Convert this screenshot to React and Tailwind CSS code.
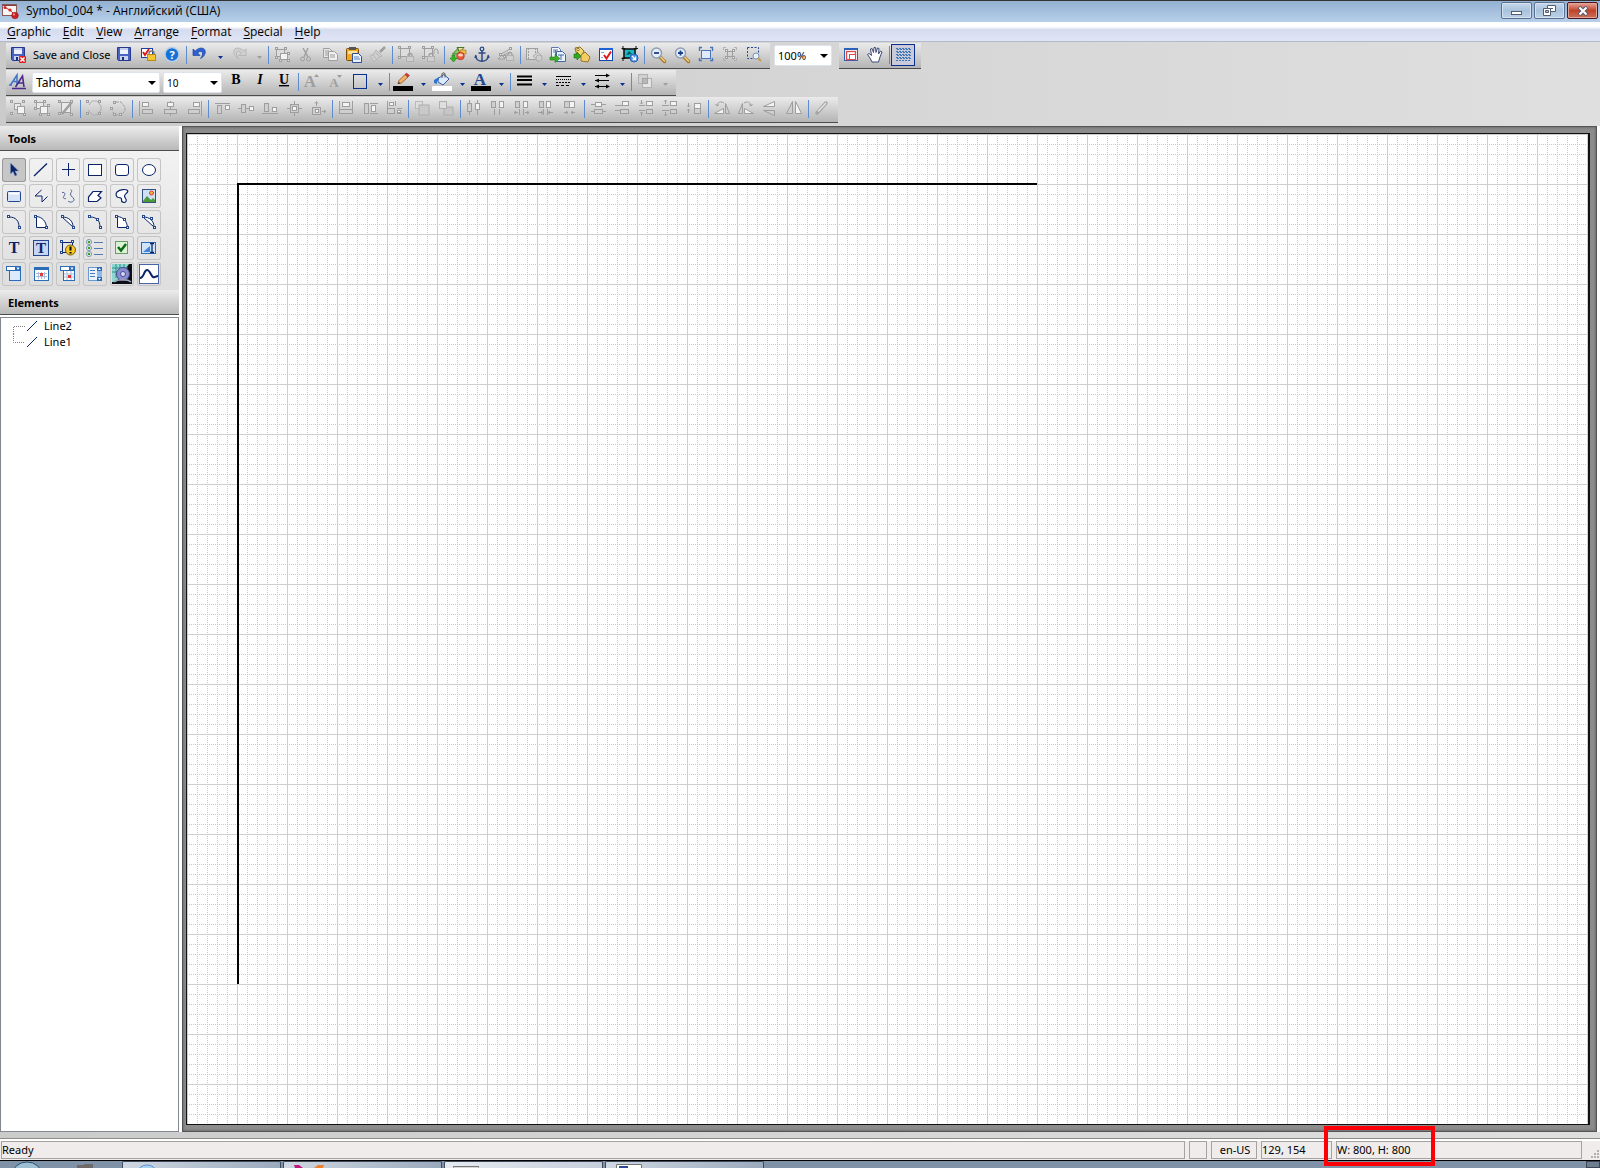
import React, { useState } from "react";
import clsx from "clsx";

const G = "#9e9e9e";
const L = "#cfcfcf";
const N = "#0a246a";

// small square drawn on the pixel grid
const Box = ({ x, y, w, h, fill = "none", c = G }) => (
  <rect x={x + 0.5} y={y + 0.5} width={w - 1} height={h - 1} fill={fill} stroke={c} />
);
const Handles = ({ pts, c = G, fill = "#e4e4e4" }) =>
  pts.map(([x, y]) => <Box key={`${x}-${y}`} x={x} y={y} w={3} h={3} c={c} fill={fill} />);

const Floppy = () => (
  <>
    <path d="M3.500 2.500h13v13h-12l-1-1z" fill="#4a62c0" stroke="#26378c" />
    <rect x="6" y="3" width="8" height="6" fill="#eef2fd" />
    <path d="M6 3h8v2H6z" fill="#c4d0f0" />
    <rect x="6" y="11" width="8" height="4" fill="#c9d2ef" />
    <rect x="8" y="12" width="2" height="3" fill="#1d2b74" />
  </>
);
const Lens = ({ children }) => (
  <>
    <path d="M12 12l4.500 4.500" stroke="#a87b2e" strokeWidth="3.500" strokeLinecap="round" />
    <path d="M12.500 12l4 4" stroke="#f0cf86" strokeWidth="1.500" strokeLinecap="round" />
    <circle cx="8.500" cy="8" r="5" fill="#e4eefb" stroke="#8f9bb0" strokeWidth="1.400" />
    {children}
  </>
);
const Lock = ({ x, y }) => (
  <g transform={`translate(${x} ${y})`}>
    <path d="M2 4V2.500a2 2 0 0 1 4 0V4" fill="none" stroke={G} strokeWidth="1.300" />
    <rect x="0.500" y="3.500" width="7" height="5" fill={L} stroke="#b0b0b0" />
  </g>
);

const ICONS = {
  saveClose: (<><Floppy /><rect x="11" y="11" width="7" height="7" rx="1" fill="#e02020" /><path d="M12.500 12.500l4 4m0-4l-4 4" stroke="#fff" strokeWidth="1.500" /></>),
  save: <Floppy />,
  check: (<><Box x={3} y={3} w={12} h={10} fill="#fff" c="#1b3fa5" /><path d="M5 7l2 3 4-6" fill="none" stroke="#e01818" strokeWidth="2" /><path d="M11 10V8.500a2.500 2.500 0 0 1 5 0V10" fill="none" stroke="#777" strokeWidth="1.400" /><rect x="9.500" y="9.500" width="8" height="6" fill="#f5c733" stroke="#b98a10" /></>),
  help: (<><circle cx="10" cy="9.500" r="7" fill="#1672d6" stroke="#b7cdea" strokeWidth="1.500" /><text x="10" y="13.500" textAnchor="middle" fontSize="11" fontWeight="700" fill="#fff" fontFamily="Noto Sans">?</text></>),
  undo: (<path d="M3 4v6.500h7L7.700 8C9.500 5.500 13 6 12.500 9c-.3 2-1 3-2 4.500 3-1.500 5-4 4.800-7C15 2.500 9.500 1.500 5.200 6z" fill="#2f62cf" stroke="#1c46a8" strokeWidth="0.700" />),
  redo: (<path d="M17 4v6.500h-7L12.300 8C10.500 5.500 7 6 7.500 9c.3 2 1 3 2 4.500-3-1.500-5-4-4.800-7C5 2.500 10.500 1.500 14.800 6z" fill={L} stroke="#adadad" strokeWidth="0.700" />),
  group: (<><Box x={6} y={4} w={7} h={7} fill="#e9e9e9" /><Box x={9} y={7} w={8} h={8} fill="#f3f3f3" /><Handles pts={[[2, 1], [14, 1], [2, 13], [15, 14]]} /></>),
  ungroup: (<><Box x={4} y={3} w={8} h={7} fill="#e9e9e9" /><Box x={8} y={7} w={8} h={8} fill="#f3f3f3" /><Handles pts={[[2, 1], [11, 1], [2, 8], [15, 5], [7, 14], [15, 14]]} /></>),
  regroup: (<><Box x={5} y={3} w={10} h={11} fill="#e9e9e9" /><path d="M6 15L16 3" stroke={G} strokeWidth="2.500" /><Handles pts={[[2, 1], [14, 1], [2, 13], [14, 14]]} /></>),
  dup: (<><Box x={4} y={4} w={9} h={8} fill="#ddd" /><Box x={8} y={8} w={8} h={7} fill="#f3f3f3" /><Handles pts={[[3, 2], [12, 2], [3, 11], [15, 7], [15, 14], [7, 14]]} /></>),
  cut: (<><path d="M7 3l5 9M12 3L8 12" stroke={G} strokeWidth="1.400" /><circle cx="6.500" cy="14" r="2" fill="none" stroke={G} /><circle cx="12.500" cy="14" r="2" fill="none" stroke={G} /></>),
  copy: (<><path d="M3.500 3.500h6l3 3v6h-9z" fill="#e6e6e6" stroke={G} /><path d="M5 6h4M5 8h4M5 10h3" stroke={G} /><path d="M8.500 6.500h6l3 3v6h-9z" fill="#efefef" stroke={G} /><path d="M10 10h5M10 12h5" stroke={G} /></>),
  paste: (<><rect x="2.500" y="3.500" width="12" height="12" rx="1" fill="#f2a91d" stroke="#7c4b08" /><rect x="5" y="2" width="7" height="3" fill="#555" /><path d="M4 6h9v3H4z" fill="#ffe29a" /><path d="M8.500 8.500h6l3 3v6h-9z" fill="#eaf2fd" stroke="#2d4f93" /><path d="M10 12h5M10 14h6" stroke="#5a84c8" /></>),
  brush: (<><path d="M17 2l-5 5" stroke={G} strokeWidth="2.500" /><path d="M8 5l6 6-3 1-5 5-4-6 4-2z" fill={L} stroke="#b4b4b4" /><path d="M5 10l4 5M8 8l4 4" stroke="#b4b4b4" /></>),
  lockShape: (<><Box x={4} y={3} w={10} h={9} fill="#ddd" /><Handles pts={[[2, 1], [12, 1], [2, 11]]} /><Lock x={10} y={8} /></>),
  unlockShape: (<><Box x={4} y={3} w={9} h={9} fill="#ddd" /><Handles pts={[[2, 1], [11, 1], [2, 11]]} /><Lock x={7} y={8} /><path d="M14 9V6a2 2 0 0 1 4 0v3" fill="none" stroke={G} /></>),
  shapes: (<><path d="M9 2.500h7L11 8z" fill="#f4e3a0" stroke="#46752c" /><path d="M4.500 9L10 3.500 12 9z" fill="#8ccf58" stroke="#46752c" /><path d="M12 5h6v4h-6z" fill="#f0c14a" stroke="#a6741b" strokeWidth="0.700" /><circle cx="12.500" cy="11" r="3.800" fill="#e85a3a" stroke="#b02e1a" strokeWidth="0.700" /><ellipse cx="12.500" cy="10" rx="2.500" ry="1.500" fill="#ffd1bd" /><path d="M4 10h3v3h2l-3.500 4L2 13h2z" fill="#38b424" stroke="#188410" strokeWidth="0.600" /></>),
  anchor: (<><circle cx="10" cy="4" r="1.800" fill="none" stroke="#2b4a86" strokeWidth="1.300" /><path d="M10 6v10M6.500 8h7M4 11c0 7 12 7 12 0M4 10l-1 3M16 10l1 3" fill="none" stroke="#2b4a86" strokeWidth="1.500" /></>),
  anchorGray: (<><path d="M5 9l9-5M8 10l6-3M4 13l5-4" stroke={G} /><Handles pts={[[13, 2], [3, 8], [7, 10]]} /><path d="M2 14l4-4 3 4z" fill={L} stroke={G} /><Lock x={10} y={7} /></>),
  filmGray: (<><Box x={2} y={3} w={12} h={12} fill="#ddd" /><path d="M4.500 3v12M11.500 3v12" stroke={G} strokeDasharray="2 1" /><path d="M9 11l5-4 4 4-4 6z" fill={L} stroke="#b0b0b0" /><circle cx="15" cy="13" r="3" fill={L} stroke="#b0b0b0" /></>),
  pages: (<><path d="M3.500 2.500h7l2 2v9h-9z" fill="#f3f7fd" stroke="#5a79ad" /><path d="M5 5h5M5 7h3M7.500 5v6" stroke="#5a79ad" /><path d="M8.500 6.500h6l3 3v7h-9z" fill="#eaf2fd" stroke="#4467a3" /><path d="M10 10h6M13 10v5" stroke="#4467a3" /><path d="M2 12h5v-2.500l5 4-5 4V15H2z" fill="#3fae2a" stroke="#1d7d12" strokeWidth="0.600" /></>),
  tags: (<><path d="M3 3l5-1 4 4-3 6-4-1z" fill="#f4da74" stroke="#8f6f1c" /><path d="M9 10l4-3 5 5-2 5-7-1z" fill="#f3cd63" stroke="#9b7425" /><circle cx="6" cy="4.500" r="1.200" fill="#fff" stroke="#8f6f1c" /><path d="M2 9h3V7l4 4-4 4v-2H2z" fill="#2fa91f" stroke="#15700c" strokeWidth="0.600" /></>),
  checkList: (<><Box x={3} y={3} w={14} h={13} fill="#fff" c="#0b46b4" /><rect x="3" y="3" width="14" height="2" fill="#1e62d8" /><path d="M5 7.500h3M5 12.500h2" stroke="#7ea0d8" /><path d="M8 10l2.500 3.500L15 6.500" fill="none" stroke="#e01818" strokeWidth="2" /></>),
  picClock: (<><rect x="4" y="4" width="11" height="9" fill="#18b9c9" stroke="#111" strokeWidth="1.600" /><path d="M3 1v4M1.500 3.500h4M16 1v4M14 3.500h4M1.500 13.500h4M3 12v4" stroke="#111" /><path d="M6 10l3-4 3 3z" fill="#0d5560" /><circle cx="14" cy="13" r="4" fill="#4d8fe6" stroke="#2460b8" /><path d="M12 11l3.500 3.500M15.500 11.500v3h-3" fill="none" stroke="#fff" strokeWidth="1.300" /></>),
  zoomOut: <Lens><path d="M6 8h5" stroke="#1d3f8d" strokeWidth="1.800" /></Lens>,
  zoomIn: <Lens><path d="M6 8h5M8.500 5.500v5" stroke="#1d3f8d" strokeWidth="1.800" /></Lens>,
  fit: (<><Box x={5} y={5} w={10} h={9} fill="#dfeafc" c="#4a74b8" /><path d="M3.500 6V2.500H6M14 2.500h2.500V6M3.500 13v2.500H6M14 15.500h2.500V13" fill="none" stroke="#4a74b8" strokeWidth="1.400" /></>),
  fitGray: (<><Box x={7} y={6} w={6} h={6} /><Handles pts={[[5, 4], [12, 4], [5, 11], [12, 11]]} fill="#f4f4f4" /><path d="M3.500 5V2.500H6M14 2.500h2.500V5M3.500 13v2.500H6M14 15.500h2.500V13" fill="none" stroke="#b0b0b0" /></>),
  zoomSel: (<><rect x="3.500" y="2.500" width="11" height="11" fill="none" stroke="#20468f" strokeDasharray="2 1.500" /><circle cx="12" cy="11" r="3" fill="#e8f0fb" stroke="#7b93b8" /><path d="M14 13l3 3" stroke="#c79a4b" strokeWidth="2" /></>),
  windowRed: (<><Box x={3} y={3} w={14} h={13} fill="#fff" c="#2b62b8" /><rect x="3" y="3" width="14" height="2" fill="#2b62b8" /><rect x="5.500" y="6.500" width="9" height="8" fill="none" stroke="#e24848" strokeWidth="1.300" /><rect x="8.500" y="9.500" width="6" height="5" fill="#fff" stroke="#e24848" /></>),
  hand: (<path d="M7 17L5 13 2.500 9.500 4 8.500l2.500 2L5.500 4 7 3.500l1.500 4L9 2.500h1.500L11 7.500l1.500-4.500L14 3.500 13.500 9l2-3 1.500 1-2 5-1.500 5z" fill="#fff" stroke="#3e4a78" />),
  gridOn: (<path d="M3 3.500h14M4 4.500h14M3 6.500h14M4 7.500h14M3 9.500h14M4 10.500h14M3 12.500h14M4 13.500h14M3 15.500h14" stroke="#3f77b8" strokeDasharray="2 1" />),

  fontAA: (<><path d="M1 13h3M2.500 13L9 3v10M4.500 9.500H9" fill="none" stroke="#3f74c9" strokeWidth="1.500" /><path d="M7.500 15L14.500 4l1.500 11M10 11h6M4 16.500h14" fill="none" stroke="#4b2a8c" strokeWidth="1.600" /></>),
  bold: <text x="10" y="12" textAnchor="middle" fontSize="14" fontWeight="700" fontFamily="Liberation Serif">B</text>,
  italic: <text x="10" y="12" textAnchor="middle" fontSize="14" fontWeight="700" fontStyle="italic" fontFamily="Liberation Serif">I</text>,
  underline: <text x="10" y="12" textAnchor="middle" fontSize="14" fontWeight="700" textDecoration="underline" fontFamily="Liberation Serif">U</text>,
  grow: (<><text x="8" y="15" textAnchor="middle" fontSize="17" fontWeight="700" fill={G} fontFamily="Liberation Serif">A</text><path d="M12 5l2.500-3L17 5z" fill={G} /></>),
  shrink: (<><text x="8" y="15" textAnchor="middle" fontSize="13" fontWeight="700" fill={G} fontFamily="Liberation Serif">A</text><path d="M11 3h5l-2.500 3z" fill={G} /></>),
  rect: <Box x={3} y={2} w={14} h={15} c="#0a2f8f" />,
  pencil: (<><path d="M5 11.500L6 8.500l6-6 3 2.500-6.500 6z" fill="#f3b268" stroke="#8c4a1c" strokeWidth="0.800" /><path d="M5 12l.7-2 1.500 1.300z" fill="#222" /><path d="M12 2.500L13.500 1l3 2.500L15 5z" fill="#d83a3a" stroke="#8c2a2a" strokeWidth="0.500" /><path d="M0 14h20v5H0z" fill="#000" /></>),
  bucket: (<><path d="M6 6.500l6-4 5 4.500-6 6-5-3z" fill="#dbe9fb" stroke="#355d9e" /><path d="M10 6V2c0-1.500 3-1.500 3 0v3.500" fill="none" stroke="#555" /><path d="M2 8l5-3v3l-2 1v3l-3-1z" fill="#2f74d0" /><path d="M0 14h20v5H0z" fill="#fff" /></>),
  fontColor: (<><text x="9" y="13" textAnchor="middle" fontSize="17" fontWeight="700" fill="#24468f" fontFamily="Liberation Serif">A</text><path d="M0 14h20v5H0z" fill="#000" /></>),
  weight: <path d="M3 4.500h15M3 8h15M3 12.500h15" stroke="#000" strokeWidth="2" />,
  dash: (<><path d="M3 4.500h15" stroke="#000" /><path d="M3 7.500h15" stroke="#000" strokeDasharray="1 1" /><path d="M3 10.500h15" stroke="#000" strokeDasharray="2 1" /><path d="M3 13.500h15" stroke="#000" strokeDasharray="3 2" /></>),
  arrows: (<><path d="M3 3.500h14M3 8.500h14M3 14.500h14" stroke="#000" /><path d="M14 1.500l4 2-4 2zM7 6.500l-4 2 4 2zM7 12.500l-4 2 4 2zM14 12.500l4 2-4 2z" fill="#000" /></>),
  shadow: (<><Box x={3} y={2} w={10} h={10} fill="#d0d0d0" c="#b0b0b0" /><Box x={7} y={6} w={10} h={10} fill="#e4e4e4" c="#b0b0b0" /><Box x={7} y={6} w={6} h={6} fill="#b8b8b8" c="#a5a5a5" /></>),

  poly1: (<><path d="M5 6l3-4h5l4 5v4l-4 5H9l-5-5" fill="none" stroke="#adadad" /><Handles pts={[[2, 1], [14, 1], [2, 13], [14, 13]]} /></>),
  poly2: (<><path d="M8 3h5l4 5v4l-4 4H7l-3-4" fill="none" stroke={G} strokeDasharray="3 1" /><Handles pts={[[5, 2], [2, 8], [5, 14], [11, 14]]} /></>),
  alLeft: (<><path d="M3.500 2v15" stroke={G} /><Box x={6} y={3} w={7} h={5} fill="#f4f4f4" /><Box x={6} y={10} w={11} h={5} fill={L} /></>),
  alCenter: (<><path d="M10.500 2v15" stroke={G} /><Box x={7} y={3} w={7} h={5} fill="#f4f4f4" /><Box x={4} y={10} w={13} h={5} fill={L} /></>),
  alRight: (<><path d="M17.500 2v15" stroke={G} /><Box x={9} y={3} w={7} h={5} fill="#f4f4f4" /><Box x={4} y={10} w={12} h={5} fill={L} /></>),
  alTop: (<><path d="M3 4.500h15" stroke={G} /><Box x={5} y={6} w={5} h={9} fill={L} /><Box x={13} y={6} w={5} h={5} fill="#f4f4f4" /></>),
  alMiddle: (<><path d="M2 9.500h16" stroke={G} /><Box x={5} y={5} w={5} h={9} fill={L} /><Box x={13} y={7} w={5} h={5} fill="#f4f4f4" /></>),
  alBottom: (<><path d="M2 14.500h16" stroke={G} /><Box x={4} y={4} w={5} h={9} fill={L} /><Box x={12} y={8} w={5} h={5} fill="#f4f4f4" /></>),
  ctr: (<><path d="M3 9.500h15M10.500 2v15" stroke={G} /><Box x={6} y={5} w={9} h={9} fill={L} /><Box x={8} y={7} w={5} h={5} fill="#f4f4f4" /></>),
  ctrPage: (<><Box x={4} y={8} w={9} h={8} fill={L} /><Box x={7} y={10} w={4} h={4} fill="#f4f4f4" /><path d="M8.500 7V3M7 4.500l1.500-2 1.500 2M14 12.500h4M16 11l2 1.500-2 1.500" fill="none" stroke={G} /></>),
  sameW: (<><path d="M3.500 2v8M16.500 2v8" stroke={G} /><Box x={6} y={3} w={8} h={5} fill="#f4f4f4" /><Box x={3} y={10} w={14} h={5} fill={L} /></>),
  sameH: (<><path d="M10 4.500h8M10 14.500h8" stroke={G} /><Box x={4} y={4} w={5} h={11} fill={L} /><Box x={11} y={6} w={5} h={7} fill="#f4f4f4" /></>),
  sameWH: (<><path d="M3.500 2v7M11.500 2v5M13 9.500h5M13 14.500h5" stroke={G} /><Box x={5} y={3} w={5} h={4} fill="#f4f4f4" /><Box x={3} y={9} w={8} h={6} fill={L} /><Box x={13} y={11} w={4} h={3} fill="#f4f4f4" /></>),
  front: (<><Box x={3} y={2} w={8} h={8} fill="#dedede" c="#b9b9b9" /><rect x="7" y="6" width="10" height="10" fill="#c9c9c9" stroke="#adadad" /></>),
  back: (<><rect x="8" y="8" width="9" height="8" fill="#c6c6c6" stroke="#adadad" /><Box x={3} y={2} w={8} h={8} fill="#dedede" c="#b0b0b0" /></>),
  dist1: (<><path d="M5.500 1v15M13.500 1v15" stroke={G} /><Box x={3} y={4} w={5} h={9} fill={L} /><Box x={11} y={4} w={5} h={7} fill="#f4f4f4" /></>),
  dist2: (<><Box x={3} y={2} w={5} h={7} fill={L} /><Box x={11} y={2} w={5} h={7} fill="#f4f4f4" /><path d="M6.500 10v6M11.500 10v6" stroke={G} /></>),
  dist3: (<><Box x={3} y={2} w={5} h={7} fill={L} /><Box x={11} y={2} w={5} h={7} fill="#f4f4f4" /><path d="M7.500 10v6M11.500 10v6M2 13.500h4M13 13.500h4M4 12l-2 1.500 2 1.500M15 12l2 1.500-2 1.500" fill="none" stroke={G} /></>),
  dist4: (<><Box x={3} y={2} w={5} h={7} fill={L} /><Box x={10} y={2} w={5} h={7} fill="#f4f4f4" /><path d="M7.500 10v6M11.500 10v6M2 13.500h5M12 13.500h5M5 12l2 1.500-2 1.500M14 12l-2 1.500 2 1.500" fill="none" stroke={G} /></>),
  dist5: (<><Box x={4} y={2} w={6} h={7} fill={L} /><Box x={9} y={2} w={6} h={7} fill="#f4f4f4" /><path d="M4 13.500h4M11 13.500h4M6 12l2 1.500-2 1.500M13 12l-2 1.500 2 1.500" fill="none" stroke={G} /></>),
  vdist1: (<><path d="M3 5.500h15M3 12.500h15" stroke={G} /><Box x={7} y={3} w={7} h={5} fill="#f4f4f4" /><Box x={6} y={10} w={9} h={5} fill={L} /></>),
  vdist2: (<><path d="M3 6.500h7M3 11.500h7" stroke={G} /><Box x={10} y={2} w={7} h={5} fill="#f4f4f4" /><Box x={8} y={10} w={9} h={5} fill={L} /></>),
  vdist3: (<><path d="M3 6.500h6M3 11.500h6M5.500 1v4M4 3.500l1.500 1.500L7 3.500M5.500 13v4M4 14.500L5.500 13 7 14.500" fill="none" stroke={G} /><Box x={10} y={2} w={7} h={5} fill="#f4f4f4" /><Box x={10} y={10} w={7} h={5} fill={L} /></>),
  vdist4: (<><path d="M2 6.500h7M2 11.500h7M5.500 1v4M4 2.500L5.500 1 7 2.500M5.500 13v4M4 15.500L5.500 17 7 15.500" fill="none" stroke={G} /><Box x={10} y={2} w={7} h={5} fill="#f4f4f4" /><Box x={10} y={10} w={7} h={5} fill={L} /></>),
  vdist5: (<><path d="M4.500 4v4M3 6.500l1.500 1.500L6 6.500M4.500 10v4M3 11.500L4.500 10 6 11.500" fill="none" stroke={G} /><Box x={10} y={4} w={7} h={6} fill="#f4f4f4" /><Box x={10} y={9} w={7} h={6} fill={L} /></>),
  rotL: (<><path d="M2.500 14.500h9v-5z" fill="#f4f4f4" stroke={G} /><path d="M13.500 4.500v10h4z" fill={L} stroke={G} /><path d="M5 7c0-4 4-5 7-3M5 7L3.500 5M5 7l2-1.500" fill="none" stroke={G} /></>),
  rotR: (<><path d="M8.500 9.500v5h9z" fill="#f4f4f4" stroke={G} /><path d="M6.500 4.500v10h-4z" fill={L} stroke={G} /><path d="M15 7c0-4-4-5-7-3M15 7l1.500-2M15 7l-2-1.500" fill="none" stroke={G} /></>),
  flipV: (<><path d="M14.500 2.500v5h-11z" fill="#f4f4f4" stroke={G} /><path d="M14.500 16.500v-5h-11z" fill={L} stroke={G} /></>),
  flipH: (<><path d="M8.500 2.500v12h-6z" fill={L} stroke={G} /><path d="M11.500 2.500v12h6z" fill="#f4f4f4" stroke={G} /></>),
  editPen: (<><path d="M5 14l9-10" stroke="#a5a5a5" strokeWidth="3.500" strokeLinecap="round" /><path d="M6 12.500L14 4" stroke="#e4e4e4" strokeWidth="1.500" /></>),
};

const Icon = ({ name }) => (
  <svg width="20" height="20" viewBox="0 0 20 20" className="block shrink-0" aria-hidden="true">{ICONS[name]}</svg>
);

// "|" is a divider, "v" an active drop arrow, "x" a disabled one
const STD_LEFT = ["save", "check", "help", "|", "undo", "v", "redo", "x", "|", "dup", "cut", "copy", "paste", "brush", "|", "lockShape", "unlockShape", "|", "shapes", "anchor", "anchorGray", "|", "filmGray", "pages", "tags", "checkList", "picClock", "|", "zoomOut", "zoomIn", "fit", "fitGray", "zoomSel"];
const FORMAT = ["bold", "italic", "underline", "|", "grow", "shrink", "rect", "v", "|", "pencil", "v", "bucket", "v", "fontColor", "v", "|", "weight", "v", "dash", "v", "arrows", "v", "|", "shadow", "x"];
const ARRANGE = ["group", "ungroup", "regroup", "|", "poly1", "poly2", "|", "alLeft", "alCenter", "alRight", "|", "alTop", "alMiddle", "alBottom", "ctr", "ctrPage", "|", "sameW", "sameH", "sameWH", "|", "front", "back", "|", "dist1", "dist2", "dist3", "dist4", "dist5", "|", "vdist1", "vdist2", "vdist3", "vdist4", "vdist5", "|", "rotL", "rotR", "flipV", "flipH", "|", "editPen"];

function Items({ list }) {
  return list.map((it, i) => {
    if (it === "|") {
      return <span key={i} className="flex w-1 shrink-0 justify-center"><span className="mt-px h-[18px] w-px bg-[#5f8bd0]" /></span>;
    }
    if (it === "v" || it === "x") {
      return (
        <button key={i} type="button" aria-label="More options" className="flex h-5 w-[15px] shrink-0 items-center justify-center pt-[5px] pl-0.5">
          <svg width="5" height="3" viewBox="0 0 5 3"><path d="M0 0h5L2.500 3z" fill={it === "v" ? "#0a2f8f" : G} /></svg>
        </button>
      );
    }
    return (
      <button key={i} type="button" aria-label={it} className="flex h-5 w-6 shrink-0 justify-center">
        <Icon name={it} />
      </button>
    );
  });
}

const Bar = ({ children, className }) => (
  <div className={clsx("flex h-[26px] items-start border-b border-[#4c4c4c] bg-linear-to-b from-[#ebebeb] via-[#d0d0d0] to-[#b4b4b4] pt-0.5", className)}>
    {children}
  </div>
);

const Combo = ({ label, value, options, className }) => (
  <div className={clsx("relative h-[21px] shrink-0 rounded-xs border border-[#dfe3ea] bg-white", className)}>
    <select aria-label={label} defaultValue={value} className="block h-full w-full appearance-none bg-transparent pl-[3px] leading-[18px] outline-none">
      {options.map((o) => <option key={o}>{o}</option>)}
    </select>
    <svg width="8" height="4" viewBox="0 0 8 4" className="pointer-events-none absolute top-2 right-[3px]"><path d="M0 0h8L4 4z" /></svg>
  </div>
);

const Tool = ({ children }) => (
  <svg width="24" height="24" viewBox="0 0 24 24" className="block" fill="none" stroke={N} aria-hidden="true">{children}</svg>
);
const ends = (pts) => <Handles pts={pts} c="#24468f" fill="#fff" />;

const TOOLS = [
  ["Select", <path d="M8.500 5v11l2.500-2.500 2 4.500 2-1-2-4h3.500z" fill={N} stroke="#7d92bd" strokeWidth="0.500" />],
  ["Line", <path d="M5 18L18 5.500" strokeWidth="1.300" />],
  ["Cross", <path d="M6 11.500h13M12.500 5v13" />],
  ["Rectangle", <rect x="5.500" y="6.500" width="13" height="11" fill="#fff" />],
  ["Rounded rectangle", <rect x="5.500" y="6.500" width="13" height="11" rx="2.500" fill="#fff" />],
  ["Ellipse", <ellipse cx="12" cy="12" rx="6.500" ry="5.500" fill="#fff" />],
  ["Button", <><rect x="5.500" y="7.500" width="13" height="10" rx="1" fill="#d5e2f7" stroke="#24468f" /><path d="M7 9.500h10" stroke="#fff" strokeWidth="2" /></>],
  ["Polyline", <path d="M12.500 6L6 12h7v6l5.500-5.500" />],
  ["Curve", <path d="M6 8.500c3-.5 3.500 1.500 2 3.500s0 3 2 2.500M12 17c2 2 6 1 6-1.500s-4-3-3.500-5.500S17 7 14.500 5.500" stroke="#4d6190" />],
  ["Polygon", <path d="M5.500 17.500V13L10 7.500h8.500l-3.500 4 3 2.500-4 3.500z" fill="#fff" strokeWidth="1.200" />],
  ["Closed curve", <path d="M7 8c3-3 9-3 10.500-1.500C19 8 14.500 10 14.500 12s3 3.500 1.500 5.500-5 .5-4.500-2c.3-1.500-1-2-3-2S5 10 7 8z" fill="#fff" strokeWidth="1.200" />],
  ["Image", <><rect x="5.500" y="5.500" width="13" height="13" fill="#cfe0f6" stroke="#31517f" /><path d="M6 17l4-5 4 4 2-2 2 2v2H6z" fill="#4c9a3b" stroke="none" /><circle cx="14.500" cy="9" r="2" fill="#f5b23a" stroke="#d7422c" /></>],
  ["Arc", <><path d="M7 7c7 0 10 4 10 10" />{ends([[5, 5], [16, 16]])}</>],
  ["Pie", <><path d="M7.500 17.500v-11C13 7 17 11 17.500 17.500z" fill="#fff" />{ends([[5, 5], [16, 16]])}</>],
  ["Chord", <><path d="M6 7c7 0 11 4 11 10z" fill="#fff" />{ends([[5, 5], [16, 16]])}</>],
  ["Arc by points", <><path d="M7 7c7 0 10 4 10 10" />{ends([[5, 5], [13, 8], [16, 16]])}</>],
  ["Pie by points", <><path d="M7.500 17.500v-11C13 7 17 11 17.500 17.500z" fill="#fff" />{ends([[5, 5], [13, 8], [16, 16]])}</>],
  ["Chord by points", <><path d="M6 7c7 0 11 4 11 10z" fill="#fff" />{ends([[5, 5], [13, 7], [16, 16]])}</>],
  ["Text", <text x="12" y="17" textAnchor="middle" fontSize="16" fontWeight="700" fill={N} stroke="none" fontFamily="Liberation Serif">T</text>],
  ["Text box", <><rect x="4.500" y="4.500" width="15" height="15" fill="#c5d5f2" stroke="#24468f" /><text x="12" y="17" textAnchor="middle" fontSize="15" fontWeight="700" fill={N} stroke="none" fontFamily="Liberation Serif">T</text></>],
  ["Active element", <><rect x="6.500" y="6.500" width="10" height="10" />{ends([[4, 4], [15, 4], [4, 15]])}<circle cx="14.500" cy="14" r="5" fill="#f6c728" stroke="#7b5a0b" /><path d="M14.500 10.500v4m0 1.500v1.500" stroke="#000" strokeWidth="2" /></>],
  ["Radio group", <>{[6, 12, 18].map((y) => <g key={y}><circle cx="6" cy={y} r="2.500" fill="#fff" stroke="#7a8ca8" /><circle cx="6" cy={y} r="1.300" fill="#2fa32a" stroke="none" /><path d={`M11 ${y + 0.5}h9`} stroke="#5878ad" /></g>)}</>],
  ["Check box", <><rect x="5.500" y="5.500" width="12" height="12" fill="#ddf3d8" stroke="#6a9a68" /><path d="M8 11l3 3.500 5-6.500" stroke="#0c6a12" strokeWidth="2.500" /></>],
  ["Input field", <><rect x="4.500" y="6.500" width="14" height="11" fill="#cfe4fb" stroke="#2b6cb8" /><path d="M6 16l7-6v6z" fill="#3d86d8" stroke="none" /><path d="M13 7.500h4M13 16.500h4M15 7v9" strokeWidth="1.300" /></>],
  ["Combo box", <><rect x="4.500" y="4.500" width="14" height="4" fill="#fff" stroke="#2b6cb8" /><path d="M13 4h6v5h-6z" fill="#2b6cb8" stroke="none" /><path d="M14.500 5.500h3L16 8z" fill="#fff" stroke="none" /><rect x="7.500" y="8.500" width="11" height="10" fill="#dcebfb" stroke="#2b6cb8" /></>],
  ["Calendar", <><rect x="5.500" y="5.500" width="14" height="13" fill="#fff" stroke="#2b6cb8" /><path d="M5 5h15v3H5z" fill="#2b6cb8" stroke="none" /><path d="M7 11.500h11M7 14.500h11M9.500 10v7M12.500 10v7M15.500 10v7" stroke="#a9bcdc" /><path d="M11 11h3v3h-3z" fill="#e03a3a" stroke="none" /></>],
  ["Date picker", <><rect x="4.500" y="4.500" width="14" height="4" fill="#fff" stroke="#2b6cb8" /><path d="M13 4h6v5h-6z" fill="#2b6cb8" stroke="none" /><path d="M14.500 5.500h3L16 8z" fill="#fff" stroke="none" /><rect x="7.500" y="8.500" width="11" height="10" fill="#fff" stroke="#2b6cb8" /><path d="M8 12h10M8 15h10M11 9v9M15 9v9" stroke="#a9bcdc" /><path d="M12 13h3v3h-3z" fill="#e03a3a" stroke="none" /></>],
  ["List", <><rect x="5.500" y="5.500" width="13" height="13" fill="#eaf3fd" stroke="#6a9ad0" /><path d="M7 8.500h5M7 11.500h5M7 14.500h5" stroke="#4a7ab8" /><path d="M14 5h5v14h-5z" fill="#8fb9e6" stroke="none" /><path d="M14 5h5v4h-5zM14 15h5v4h-5z" fill="#2b6cb8" stroke="none" /><path d="M15 8l1.500-2L18 8zM15 16l1.500 2 1.500-2z" fill="#fff" stroke="none" /></>],
  ["Symbol", <><rect x="2" y="2" width="20" height="20" fill="#0b0f14" stroke="none" /><path d="M2 2h17L6 20H2z" fill="#8fd5d0" stroke="none" /><path d="M2 6h16M2 10h13M6 2v14M10 2v12M14 2v9" stroke="#2a8f8b" /><circle cx="13" cy="12" r="6.500" fill="#8a8cd0" stroke="#494a90" /><circle cx="13" cy="12" r="2.500" fill="#d8daf4" stroke="#494a90" /><path d="M4 20c3-3 14-3 17 0" stroke="#9fa3b5" strokeWidth="1.500" /></>],
  ["Trend", <><rect x="2.500" y="2.500" width="19" height="19" fill="#fff" stroke="#4a64a8" /><path d="M3 16c4 0 4-8 7-8s4 6 6 7 3-1 5-1" strokeWidth="2" /></>],
];

const MENU = ["Graphic", "Edit", "View", "Arrange", "Format", "Special", "Help"];

function TitleBar() {
  const btn = "flex h-[17px] w-[31px] items-center justify-center rounded-xs border border-[#5c7192] bg-linear-to-b from-[#c6d8ea] via-[#a9c2db] to-[#bdd2e8] shadow-[inset_0_0_0_1px_#d3e1f0]";
  return (
    <header className="flex h-[22px] shrink-0 items-start border-t border-[#333] bg-linear-to-b from-[#94b1d2] to-[#b7cfe9] pr-0.5 pl-0.5">
      <svg width="17" height="17" viewBox="0 0 17 17" className="mt-0.5" aria-hidden="true">
        <rect x="0.500" y="1.500" width="14" height="11" fill="#f8f4f4" stroke="#8a5a5a" />
        <path d="M1 2h13v1H1z" fill="#8d3a3a" />
        <path d="M2 4l6 3 5 5" stroke="#b53030" fill="none" />
        <circle cx="3" cy="4.500" r="1.500" fill="#d92525" />
        <circle cx="8" cy="7" r="1.600" fill="#d92525" />
        <circle cx="13" cy="12.500" r="3.300" fill="#c92222" stroke="#8d1818" strokeWidth="0.500" />
        <circle cx="12" cy="11.500" r="1" fill="#f6a5a5" />
      </svg>
      <h1 className="ml-[7px] flex-1 font-['Open_Sans',sans-serif] text-xs leading-5">Symbol_004 * - Английский (США)</h1>
      <div className="mt-px flex gap-0.5">
        <button type="button" aria-label="Minimize" className={btn}>
          <svg width="11" height="11" viewBox="0 0 11 11"><rect x="0.500" y="6.500" width="10" height="3" fill="#fff" stroke="#555d70" /></svg>
        </button>
        <button type="button" aria-label="Restore" className={btn}>
          <svg width="13" height="11" viewBox="0 0 13 11" fill="#fff" stroke="#555d70"><path d="M4.500.500h8v6h-8z" /><path d="M7 3.500h3" /><path d="M.500 3.500h7v7h-7z" /><path d="M2.500 5.500h3v2h-3z" fill="#a9c2db" /></svg>
        </button>
        <button type="button" aria-label="Close" className="flex h-[17px] w-[31px] items-center justify-center rounded-xs border border-[#4b1622] bg-linear-to-b from-[#e5a497] via-[#bf4329] to-[#cc6f58] shadow-[inset_0_0_0_1px_#e2a598]">
          <svg width="12" height="10" viewBox="0 0 12 10"><path d="M2 1l8 8M10 1L2 9" stroke="#555d70" strokeWidth="4" /><path d="M2.500 1.500l7 7M9.500 1.500l-7 7" stroke="#fff" strokeWidth="2" /></svg>
        </button>
      </div>
    </header>
  );
}

function Toolbars() {
  return (
    <div className="flex shrink-0 flex-col items-start gap-px bg-linear-to-r from-[#cbcbcb] to-[#dfdfdf] pt-px pb-[3px] pl-1.5">
      <div className="flex">
        <Bar className="pr-1">
          <button type="button" className="flex h-5 w-[106px] shrink-0 items-center pl-0.5 whitespace-nowrap">
            <Icon name="saveClose" />
            <span className="ml-[5px]">Save and Close</span>
          </button>
          <Items list={STD_LEFT} />
        </Bar>
        <div className="px-1 pt-0.5 pr-[7px]">
          <Combo label="Zoom" value="100%" options={["50%", "100%", "200%"]} className="w-[58px]" />
        </div>
        <Bar className="pr-1.5">
          <Items list={["windowRed", "hand", "|"]} />
          <button type="button" aria-label="Grid" aria-pressed="true" className="-mt-px flex h-[22px] w-6 items-center justify-center border border-[#0a2f8f] bg-[#c9cbdb]">
            <Icon name="gridOn" />
          </button>
        </Bar>
      </div>
      <Bar className="pr-1">
        <Items list={["fontAA"]} />
        <Combo label="Font" value="Tahoma" options={["Arial", "Tahoma"]} className="ml-0.5 w-32 text-xs" />
        <Combo label="Font size" value="10" options={["8", "10", "12"]} className="mr-0.5 ml-[3px] w-[59px] text-[10px]" />
        <Items list={FORMAT} />
      </Bar>
      <Bar className="pr-1">
        <Items list={ARRANGE} />
      </Bar>
    </div>
  );
}

const PanelHead = ({ children }) => (
  <h2 className="h-[25px] shrink-0 border-b border-[#4c4c4c] bg-linear-to-b from-[#ececec] to-[#b9b9b9] pl-2 text-[11px] leading-[25px] font-bold">{children}</h2>
);

function Sidebar() {
  const [active, setActive] = useState("Select");
  return (
    <aside className="flex w-[179px] shrink-0 flex-col">
      <PanelHead>Tools</PanelHead>
      <div className="bg-linear-to-b from-[#f2f2f2] to-[#dedede] px-0.5 pt-[7px] pb-1">
        <div className="grid w-max grid-cols-6 gap-x-[3px] gap-y-0.5">
          {TOOLS.map(([name, art]) => (
            <button
              key={name}
              type="button"
              aria-label={name}
              onClick={() => setActive(name)}
              className={clsx("size-6 rounded-[3px]", active === name ? "bg-[#c6c6c6] shadow-[inset_0_0_0_1px_#999]" : "shadow-[inset_0_0_0_1px_#c4c4c4]")}
            >
              <Tool>{art}</Tool>
            </button>
          ))}
        </div>
      </div>
      <PanelHead>Elements</PanelHead>
      <div className="mt-0.5 flex-1 border border-[#828790] bg-white">
        <ul>
          {["Line2", "Line1"].map((name, i) => (
            <li key={name} className="flex h-4 items-center pl-3">
              <svg width="26" height="16" viewBox="0 0 26 16" className="block" aria-hidden="true">
                <path d={i === 0 ? "M.5 16V8.500H12" : "M.5 0V8.500H12"} fill="none" stroke="#808080" strokeDasharray="1 1" />
                <path d="M14 13L24 3" stroke={N} />
              </svg>
              <span className="ml-[5px]">{name}</span>
            </li>
          ))}
        </ul>
      </div>
    </aside>
  );
}

function Canvas() {
  return (
    <main className="mr-[3px] ml-[3px] flex min-w-0 flex-1 border border-[#555] bg-[#8c8c8c] pt-1.5 pr-1.5 pb-1.5 pl-[3px] shadow-[inset_0_0_3px_#5a5a5a]">
      <div className="flex min-w-0 flex-1 border-t border-r-2 border-b border-l border-[#111] bg-white">
        <svg className="block h-full w-full" aria-label="Drawing area">
          <defs>
            <pattern id="minor" width="10" height="10" patternUnits="userSpaceOnUse">
              <path d="M.500 0v10M0 .500h10" stroke="#c9c9c9" strokeDasharray="1 1" shapeRendering="crispEdges" />
            </pattern>
            <pattern id="major" width="50" height="50" patternUnits="userSpaceOnUse">
              <rect width="50" height="50" fill="url(#minor)" />
              <path d="M.500 0v50M0 .500h50" stroke="#cfcfcf" shapeRendering="crispEdges" />
            </pattern>
          </defs>
          <rect width="100%" height="100%" fill="url(#major)" />
          <path d="M51 850V50H850" fill="none" stroke="#000" strokeWidth="2" />
        </svg>
      </div>
    </main>
  );
}

function StatusBar() {
  const cell = "h-[18px] border border-[#a5a2a2] leading-4";
  return (
    <footer className="relative flex h-[22px] shrink-0 items-start border-t border-[#8c8c8c] bg-[#f0eceb] pt-0.5 pl-px shadow-[inset_0_2px_0_#fff]">
      <div className={clsx(cell, "flex-1")}>Ready</div>
      <div className={clsx(cell, "ml-1 w-[18px]")} />
      <div className={clsx(cell, "ml-1 w-[46px] pl-0.5 text-center")}>en-US</div>
      <div className={clsx(cell, "ml-1 w-[71px]")}>129, 154</div>
      <div className={clsx(cell, "relative ml-1 w-[246px]")}>
        W: 800, H: 800
        <span className="pointer-events-none absolute -top-4 -left-[13px] h-10 w-[111px] border-4 border-[#fb0007]" />
      </div>
      <svg width="18" height="18" viewBox="0 0 18 18" aria-hidden="true">
        <path d="M15 9h2v2h-2zM12 12h2v2h-2zM15 12h2v2h-2zM9 15h2v2H9zM12 15h2v2h-2zM15 15h2v2h-2z" fill="#b5b0ae" />
      </svg>
    </footer>
  );
}

function Taskbar() {
  const task = "h-full w-[159px] overflow-hidden rounded-t-xs border-t border-r border-l border-[#3f4b5c] bg-linear-to-r";
  return (
    <nav className="flex h-2 shrink-0 gap-0.5 overflow-hidden border-t border-black bg-[#8092a8]">
      <div className="flex w-[120px] items-start pl-3">
        <svg width="90" height="7" viewBox="0 0 90 7" aria-hidden="true">
          <ellipse cx="15" cy="14" rx="15" ry="13" fill="#9fc0d4" stroke="#23506f" />
          <path d="M65 4h10v3H65zM72 3h9v4h-9z" fill="#6e6a68" />
        </svg>
      </div>
      <div className={clsx(task, "from-[#cfd8e2] to-[#9aaabd] pl-3.5")}>
        <svg width="20" height="6" viewBox="0 0 20 6" aria-hidden="true"><ellipse cx="10" cy="10" rx="9" ry="7" fill="#a9d0f5" stroke="#5b8fd0" /></svg>
      </div>
      <div className={clsx(task, "from-[#cfd8e2] to-[#9aaabd] pl-2.5")}>
        <svg width="34" height="6" viewBox="0 0 34 6" aria-hidden="true"><path d="M0 3h5l4 3H1z" fill="#c2187e" /><path d="M20 6l4-3h6l-1 3z" fill="#f0812c" /></svg>
      </div>
      <div className={clsx(task, "from-[#e6ebf1] to-[#c6cedb] pl-2")}>
        <svg width="26" height="6" viewBox="0 0 26 6" aria-hidden="true"><path d="M0 6V4.500h26V6" fill="#d8d8d8" stroke="#777" /></svg>
      </div>
      <div className={clsx(task, "from-[#cfd8e2] to-[#9aaabd] pl-2.5")}>
        <svg width="26" height="6" viewBox="0 0 26 6" aria-hidden="true"><path d="M.500 6V2.500h25V6" fill="#fff" stroke="#777" /><path d="M3 4h9v2H3z" fill="#2b4a98" /></svg>
      </div>
      <div className="ml-auto w-3.5 border border-[#3c4654] bg-[#6f7d90]" />
    </nav>
  );
}

export default function App() {
  return (
    <div className="flex h-screen flex-col overflow-hidden bg-white font-['Noto_Sans',sans-serif] text-[11px] text-black">
      <TitleBar />
      <nav className="flex h-5 shrink-0 border-b border-[#b3bacb] bg-linear-to-b from-white from-25% via-[#d5dcee] via-40% to-[#e0e5f6] pl-px font-['Open_Sans',sans-serif] text-xs">
        {MENU.map((m) => (
          <button key={m} type="button" className="px-1.5 leading-[18px]">
            <span className="underline underline-offset-2">{m[0]}</span>{m.slice(1)}
          </button>
        ))}
      </nav>
      <Toolbars />
      <div className="flex min-h-0 flex-1 bg-white">
        <Sidebar />
        <Canvas />
      </div>
      <div className="h-1.5 shrink-0 bg-linear-to-r from-[#cbcbcb] to-[#dfdfdf]" />
      <StatusBar />
      <Taskbar />
    </div>
  );
}
